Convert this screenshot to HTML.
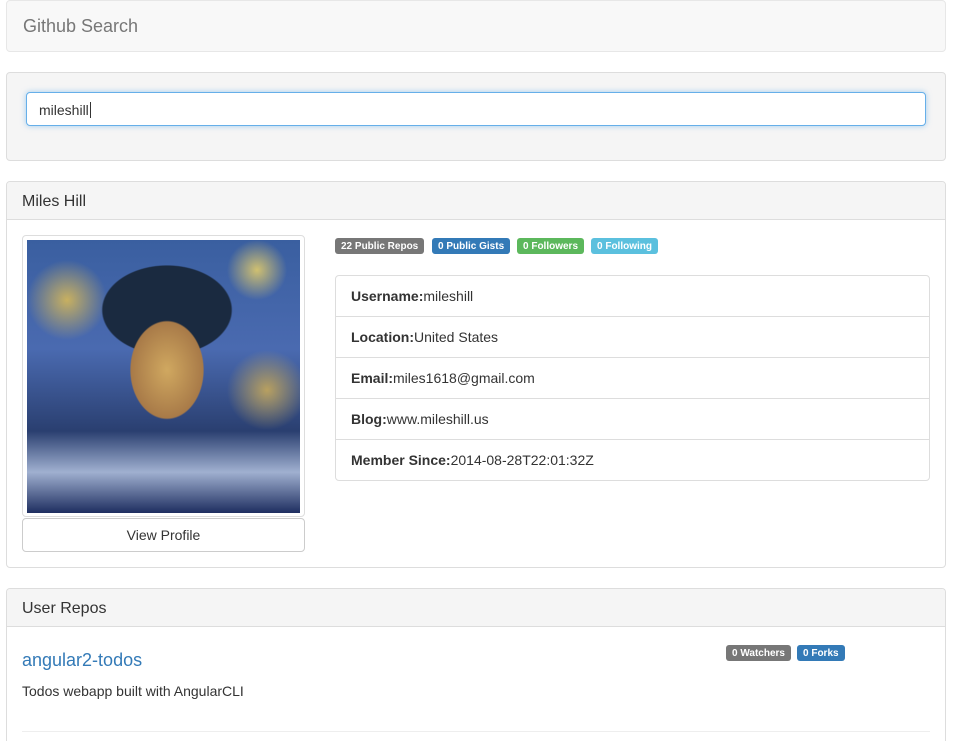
<!DOCTYPE html>
<html><head><style>
*{box-sizing:border-box;margin:0;padding:0}
html,body{width:953px;height:741px;overflow:hidden}
body{background:#fff;font-family:"Liberation Sans",sans-serif;font-size:14px;color:#333;position:relative}
.a{position:absolute}
.panel{position:absolute;left:6px;width:940px;border:1px solid #ddd;border-radius:4px;background:#fff}
.ph{background:#f5f5f5;border-bottom:1px solid #ddd;height:38px;padding:11px 15px 0;font-size:16px;color:#333;border-radius:3px 3px 0 0}
.badge{position:absolute;top:238px;height:16px;line-height:17px;font-size:10px;font-weight:bold;color:#fff;border-radius:3px;padding:0 6px}
.li{position:absolute;left:335px;width:595px;height:42px;border:1px solid #ddd;padding:12px 15px 0;font-size:14px}
</style></head><body>
<div class="panel" style="top:0;height:52px;background:#f8f8f8;border-color:#e7e7e7"><div class="a" style="left:16px;top:15px;font-size:18px;color:#777">Github Search</div></div>
<div class="panel" style="top:72px;height:89px;background:#f5f5f5"></div>
<div class="a" style="left:26px;top:92px;width:900px;height:34px;border:1px solid #66afe9;border-radius:4px;background:#fff;box-shadow:0 0 6px rgba(102,175,233,.6);padding:9px 12px 0;font-size:14px">mileshill<span style="border-left:1px solid #333;margin-left:1px"></span></div>
<div class="panel" style="top:181px;height:387px"><div class="ph">Miles Hill</div></div>
<div class="a" style="left:22px;top:235px;width:283px;height:282px;border:1px solid #ddd;border-radius:4px;padding:4px;background:#fff">
<div style="width:273px;height:273px;background:radial-gradient(ellipse 60px 80px at 140px 130px,#d0a860 0,#a87a48 60%,transparent 62%),radial-gradient(ellipse 80px 55px at 140px 70px,#1a2a40 0,#1a2a40 80%,transparent 82%),radial-gradient(circle 40px at 40px 60px,#c8b060,transparent),radial-gradient(circle 40px at 240px 150px,#b8a060,transparent),radial-gradient(circle 30px at 230px 30px,#d0c070,transparent),linear-gradient(180deg,#3a5fa0 0,#4a6ab0 40%,#2a3f70 70%,#a0b0d0 85%,#1e2e60 100%)"></div></div>
<div class="a" style="left:22px;top:518px;width:283px;height:34px;border:1px solid #ccc;border-radius:4px;text-align:center;line-height:33px">View Profile</div>
<div class="badge" style="left:335px;background:#777">22 Public Repos</div>
<div class="badge" style="left:432px;background:#337ab7">0 Public Gists</div>
<div class="badge" style="left:517px;background:#5cb85c">0 Followers</div>
<div class="badge" style="left:591px;background:#5bc0de">0 Following</div>
<div class="li" style="top:275px;border-radius:4px 4px 0 0"><b>Username:</b>mileshill</div>
<div class="li" style="top:316px"><b>Location:</b>United States</div>
<div class="li" style="top:357px"><b>Email:</b>miles1618@gmail.com</div>
<div class="li" style="top:398px"><b>Blog:</b>www.mileshill.us</div>
<div class="li" style="top:439px;border-radius:0 0 4px 4px"><b>Member Since:</b>2014-08-28T22:01:32Z</div>
<div class="panel" style="top:588px;height:153px;border-bottom:none;border-radius:4px 4px 0 0"><div class="ph">User Repos</div></div>
<div class="a" style="left:22px;top:650px;font-size:18px;color:#337ab7">angular2-todos</div>
<div class="a" style="left:22px;top:683px">Todos webapp built with AngularCLI</div>
<div class="badge" style="left:726px;top:645px;background:#777">0 Watchers</div>
<div class="badge" style="left:797px;top:645px;background:#337ab7">0 Forks</div>
<div class="a" style="left:22px;top:731px;width:908px;border-top:1px solid #eee"></div>
</body></html>
